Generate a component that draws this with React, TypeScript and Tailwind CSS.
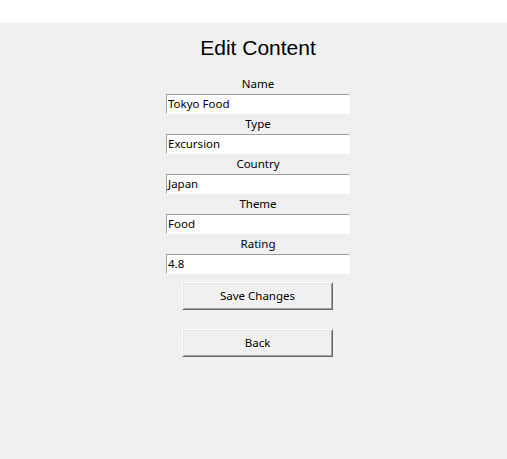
const fields = [
  { label: 'Name', value: 'Tokyo Food' },
  { label: 'Type', value: 'Excursion' },
  { label: 'Country', value: 'Japan' },
  { label: 'Theme', value: 'Food' },
  { label: 'Rating', value: '4.8' },
];

function TkButton({ children }: { children: string }) {
  return (
    <button
      type="button"
      className="h-[28px] w-[151px] border border-t-white border-l-white border-r-[#696969] border-b-[#696969] bg-[#f0f0f0] text-[11.5px] leading-none text-black shadow-[inset_1px_1px_0_#e3e3e3,inset_-1px_-1px_0_#a0a0a0]"
    >
      {children}
    </button>
  );
}

export default function App() {
  return (
    <div className="flex h-[459px] w-[507px] flex-col bg-[#f0f0f0] font-['Noto_Sans',sans-serif] text-black">
      <div className="h-[23px] bg-white" />

      <div className="flex flex-col items-center pl-[9px]">
        <h1 className="mt-[13px] h-[24px] font-['Liberation_Sans',Arial,sans-serif] text-[21px] leading-[24px]">
          Edit Content
        </h1>

        <div className="mt-[14px] flex flex-col items-center">
          {fields.map((f) => (
            <div key={f.label} className="flex flex-col items-center">
              <label className="h-[20px] text-[11.5px] leading-[20px]">{f.label}</label>
              <div className="h-[20px] w-[184px] border border-t-[#a0a0a0] border-l-[#a0a0a0] border-r-white border-b-white bg-white pl-[1px] text-[11.5px] leading-[18px]">
                {f.value}
              </div>
            </div>
          ))}
        </div>

        <div className="mt-[8px] flex flex-col items-center gap-[19px] pr-[1px]">
          <TkButton>Save Changes</TkButton>
          <TkButton>Back</TkButton>
        </div>
      </div>
    </div>
  );
}
